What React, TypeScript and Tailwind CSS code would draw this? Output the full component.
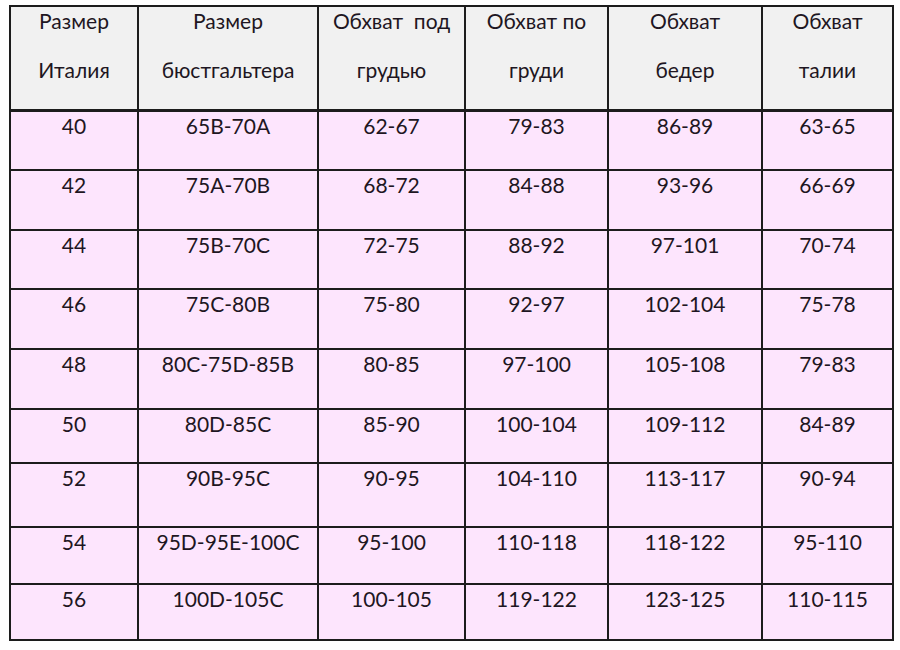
const headers: [string, string][] = [
  ["Размер", "Италия"],
  ["Размер", "бюстгальтера"],
  ["Обхват  под", "грудью"],
  ["Обхват по", "груди"],
  ["Обхват", "бедер"],
  ["Обхват", "талии"],
];

const rows = [
  { h: "h-[60px]", cells: ["40", "65B-70A", "62-67", "79-83", "86-89", "63-65"] },
  { h: "h-[60px]", cells: ["42", "75A-70B", "68-72", "84-88", "93-96", "66-69"] },
  { h: "h-[59px]", cells: ["44", "75B-70C", "72-75", "88-92", "97-101", "70-74"] },
  { h: "h-[60px]", cells: ["46", "75C-80B", "75-80", "92-97", "102-104", "75-78"] },
  { h: "h-[60px]", cells: ["48", "80C-75D-85B", "80-85", "97-100", "105-108", "79-83"] },
  { h: "h-[54px]", cells: ["50", "80D-85C", "85-90", "100-104", "109-112", "84-89"] },
  { h: "h-[64px]", cells: ["52", "90B-95C", "90-95", "104-110", "113-117", "90-94"] },
  { h: "h-[57px]", cells: ["54", "95D-95E-100C", "95-100", "110-118", "118-122", "95-110"] },
  { h: "h-[56px]", cells: ["56", "100D-105C", "100-105", "119-122", "123-125", "110-115"] },
];

const App = () => {
  return (
    <div className="w-[900px] h-[650px] bg-white pl-[9px] pt-[5px] font-['Lato','Open_Sans',sans-serif] text-[#1e1622]">
      <table className="table-fixed border-collapse text-[21px]">
        <colgroup>
          <col className="w-[128px]" />
          <col className="w-[180px]" />
          <col className="w-[147px]" />
          <col className="w-[143px]" />
          <col className="w-[154px]" />
          <col className="w-[131px]" />
        </colgroup>
        <thead>
          <tr className="h-[104px] bg-[#f1f1f1]">
            {headers.map(([a, b], i) => (
              <th
                key={i}
                className="border-2 border-[#1c1c1c] border-b-[3px] align-top font-normal pt-[2px]"
              >
                <div className="flex flex-col items-center gap-[25px] leading-[24px] whitespace-pre">
                  <span>{a}</span>
                  <span>{b}</span>
                </div>
              </th>
            ))}
          </tr>
        </thead>
        <tbody>
          {rows.map((r, i) => (
            <tr key={i} className={`${r.h} bg-[#fde5fd]`}>
              {r.cells.map((c, j) => (
                <td
                  key={j}
                  className="border-2 border-[#1c1c1c] align-top text-center leading-[24px] pt-[2px]"
                >
                  {c}
                </td>
              ))}
            </tr>
          ))}
        </tbody>
      </table>
    </div>
  );
};

export default App;
